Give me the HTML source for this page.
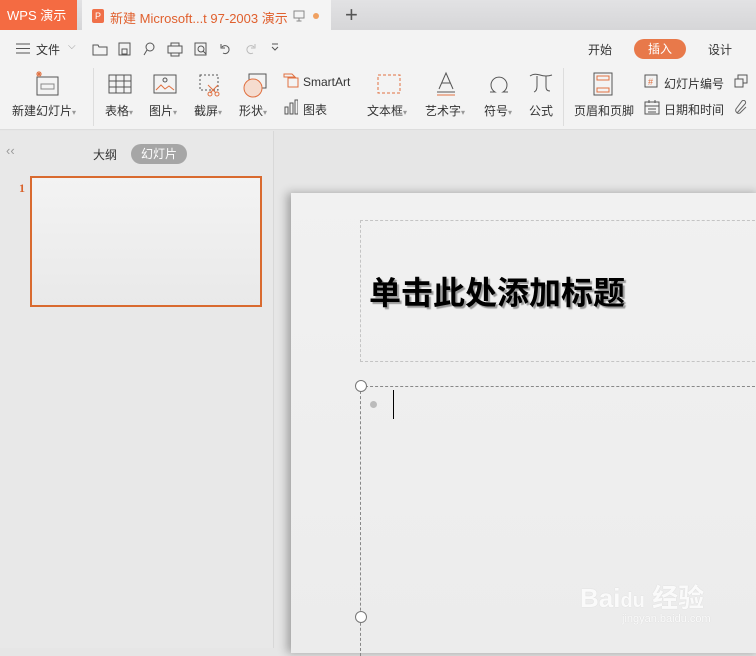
<!DOCTYPE html>
<html><head><meta charset="utf-8"><style>
*{margin:0;padding:0;box-sizing:border-box}
body{width:756px;height:648px;overflow:hidden;font-family:"Liberation Sans","Noto Sans CJK SC",sans-serif;background:#e6e6e6;position:relative;font-size:12px;color:#333}
.a{position:absolute}
.tabbar{left:0;top:0;width:756px;height:30px;background:linear-gradient(#e2e2e4,#d6d6d8)}
.lbl{position:absolute;font-size:12px;color:#333;white-space:nowrap}
svg{position:absolute}
</style></head><body>
<div class="a tabbar"></div>
<div class="a" style="left:0;top:0;width:77px;height:30px;background:#f46b42;color:#fff;font-size:13px;line-height:31px;padding-left:7px">WPS 演示</div>
<div class="a" style="left:82px;top:0;width:249px;height:30px;background:#f4f4f4"></div>
<div class="a" style="left:92px;top:9px;width:12px;height:14px;background:#f07049;border-radius:2px;color:#fff;font-size:9px;line-height:14px;text-align:center">P</div>
<div class="lbl" style="left:110px;top:8px;color:#e0602e;font-size:13px">新建 Microsoft...t 97-2003 演示</div>
<svg style="left:293px;top:10px" width="12" height="12" viewBox="0 0 12 12"><rect x="1" y="1" width="10" height="7" fill="none" stroke="#888"/><path d="M6 8v3M3.5 11h5" stroke="#888"/></svg>
<div class="a" style="left:313px;top:13px;width:6px;height:6px;border-radius:50%;background:#f0a060"></div>
<div class="lbl" style="left:345px;top:2px;font-size:22px;color:#555;font-weight:300">+</div>

<div class="a" style="left:0;top:30px;width:756px;height:100px;background:#f3f3f3;border-bottom:1px solid #ddd"></div>
<svg style="left:16px;top:43px" width="14" height="11"><path d="M0 1h14M0 5.5h14M0 10h14" stroke="#555"/></svg>
<div class="lbl" style="left:36px;top:41px">文件</div>
<div class="lbl" style="left:68px;top:41px;color:#999;font-size:10px">⌵</div>
<svg style="left:92px;top:41px" width="190" height="16" fill="none" stroke="#555">
<path d="M1 4h5l1 2h8v8H1z"/>
<rect x="27" y="2" width="11" height="12"/><rect x="30" y="8" width="5" height="5"/>
<circle cx="58" cy="6" r="4"/><path d="M55 9l-3 5"/>
<rect x="76" y="5" width="14" height="7"/><path d="M79 5V2h8v3M79 12v3h8v-3"/>
<rect x="103" y="2" width="11" height="12"/><circle cx="109" cy="8" r="3"/><path d="M111 10l3 3"/>
<path d="M130 6a4 4 0 1 1 1 6M129 3v4h4"/>
<path d="M162 6a4 4 0 1 0-1 6M163 3v4h-4" stroke="#bbb"/>
<path d="M180 6l3 3 3-3M180 3h6"/>
</svg>
<div class="lbl" style="left:588px;top:41px">开始</div>
<div class="a" style="left:634px;top:39px;width:52px;height:20px;border-radius:10px;background:#e8794a;color:#fff;text-align:center;line-height:20px;font-size:12px">插入</div>
<div class="lbl" style="left:708px;top:41px">设计</div>

<div class="a" style="left:93px;top:68px;width:1px;height:58px;background:#ddd"></div>
<div class="a" style="left:563px;top:68px;width:1px;height:58px;background:#ddd"></div>
<svg style="left:0;top:70px" width="756" height="28" fill="none" stroke="#555">
<rect x="37" y="7" width="21" height="18"/><rect x="41" y="14" width="13" height="5" stroke="#888"/><path d="M37 2l4 4M41 2l-4 4M39 1v6M36 4h6" stroke="#e07040"/>
<rect x="109" y="5" width="22" height="18"/><path d="M109 11h22M109 17h22M116 5v18M124 5v18"/>
<rect x="154" y="5" width="22" height="18"/><circle cx="165" cy="10" r="2"/><path d="M156 20l5-5 4 4 4-3 5 4" stroke="#e07040"/>
<rect x="200" y="5" width="18" height="15" stroke-dasharray="2 2"/><circle cx="210" cy="24" r="2" stroke="#e07040"/><circle cx="217" cy="24" r="2" stroke="#e07040"/><path d="M208 15l8 8M218 15l-8 8" stroke="#e07040"/>
<rect x="249" y="4" width="17" height="14"/><circle cx="253" cy="18" r="9" fill="#f5dccf" stroke="#e07040"/>
<path d="M284 4h8l3 3h-11zM288 8h10v9h-10z" stroke="#e07040"/>
<rect x="378" y="5" width="22" height="18" stroke="#e07040" stroke-dasharray="3 2"/>
<path d="M439 19l7-16 7 16M442 13h8M437 22h18" />
<path d="M437 25h18" stroke="#e07040"/>
<path d="M490 22h5a8 8 0 1 1 8 0h5"/>
<path d="M530 6q4-3 10-1t12 0M537 6v10q0 5-3 6M546 6v11q0 4 4 4"/>
<rect x="594" y="3" width="18" height="22"/><rect x="597" y="6" width="12" height="4" stroke="#e07040"/><rect x="597" y="18" width="12" height="4" stroke="#e07040"/>
</svg>
<svg style="left:284px;top:99px" width="14" height="16" fill="none" stroke="#555"><rect x="1" y="8" width="3" height="7"/><rect x="6" y="4" width="3" height="11"/><rect x="11" y="1" width="3" height="14"/></svg>
<svg style="left:644px;top:74px" width="14" height="14" fill="none" stroke="#555"><rect x="1" y="1" width="12" height="12"/><text x="4" y="11" font-size="9" fill="#e07040" stroke="none">#</text></svg>
<svg style="left:644px;top:100px" width="16" height="15" fill="none" stroke="#555"><rect x="1" y="2" width="14" height="12"/><path d="M1 6h14M4 9h8M4 12h8M5 0v3M11 0v3"/></svg>
<svg style="left:734px;top:74px" width="14" height="14" fill="none" stroke="#555"><rect x="1" y="5" width="8" height="8"/><path d="M4 5V1h9v8H9"/></svg>
<svg style="left:734px;top:100px" width="14" height="15" fill="none" stroke="#666"><path d="M3 13l8-9a2 2 0 0 0-3-3L2 9a3 3 0 0 0 4 4l6-6"/></svg>
<div class="lbl" style="left:303px;top:75px">SmartArt</div>
<div class="lbl" style="left:303px;top:101px">图表</div>
<div class="lbl" style="left:664px;top:75px">幻灯片编号</div>
<div class="lbl" style="left:664px;top:101px">日期和时间</div>
<div class="lbl" style="left:12px;top:102px">新建幻灯片<span style="color:#999;font-size:8px">▾</span></div>
<div class="lbl" style="left:105px;top:102px">表格<span style="color:#999;font-size:8px">▾</span></div>
<div class="lbl" style="left:149px;top:102px">图片<span style="color:#999;font-size:8px">▾</span></div>
<div class="lbl" style="left:194px;top:102px">截屏<span style="color:#999;font-size:8px">▾</span></div>
<div class="lbl" style="left:239px;top:102px">形状<span style="color:#999;font-size:8px">▾</span></div>
<div class="lbl" style="left:367px;top:102px">文本框<span style="color:#999;font-size:8px">▾</span></div>
<div class="lbl" style="left:425px;top:102px">艺术字<span style="color:#999;font-size:8px">▾</span></div>
<div class="lbl" style="left:484px;top:102px">符号<span style="color:#999;font-size:8px">▾</span></div>
<div class="lbl" style="left:529px;top:102px">公式</div>
<div class="lbl" style="left:574px;top:102px">页眉和页脚</div>

<div class="a" style="left:0;top:131px;width:274px;height:517px;background:#e8e8e8;border-right:1px solid #d8d8d8"></div>
<div class="lbl" style="left:6px;top:143px;color:#999;font-size:13px">‹‹</div>
<div class="lbl" style="left:93px;top:146px">大纲</div>
<div class="a" style="left:131px;top:144px;width:56px;height:20px;border-radius:10px;background:#a6a6a6;color:#fff;text-align:center;line-height:20px">幻灯片</div>
<div class="lbl" style="left:19px;top:181px;color:#d9622b;font-weight:bold;font-family:'Liberation Serif',serif">1</div>
<div class="a" style="left:30px;top:176px;width:232px;height:131px;border:2px solid #d96a2f;background:linear-gradient(#f3f3f3,#e9e9e9)"></div>

<div class="a" style="left:291px;top:193px;width:470px;height:460px;background:linear-gradient(#f1f1f1,#ececec);box-shadow:-4px 0 9px rgba(0,0,0,.3)"></div>
<div class="a" style="left:360px;top:220px;width:400px;height:142px;border:1px dashed #c4c4c4"></div>
<div class="lbl" style="left:369px;top:268px;font-size:32px;font-weight:bold;color:#000;text-shadow:2px 2px 1px #999">单击此处添加标题</div>
<div class="a" style="left:360px;top:386px;width:400px;height:270px;border-top:1px dashed #888;border-left:1px dashed #888"></div>
<div class="a" style="left:355px;top:380px;width:12px;height:12px;border-radius:50%;border:1px solid #777;background:#fff"></div>
<div class="a" style="left:355px;top:611px;width:12px;height:12px;border-radius:50%;border:1px solid #777;background:#fff"></div>
<div class="a" style="left:370px;top:401px;width:7px;height:7px;border-radius:50%;background:#bbb"></div>
<div class="a" style="left:393px;top:390px;width:1px;height:29px;background:#000"></div>
<div class="lbl" style="left:580px;top:578px;font-size:26px;font-weight:bold;color:rgba(255,255,255,.9);text-shadow:0 0 1px #ccc">Bai<span style="font-size:20px">du</span> 经验</div>
<div class="lbl" style="left:622px;top:613px;font-size:11px;color:rgba(255,255,255,.9);text-shadow:0 0 1px #ccc">jingyan.baidu.com</div>
</body></html>
